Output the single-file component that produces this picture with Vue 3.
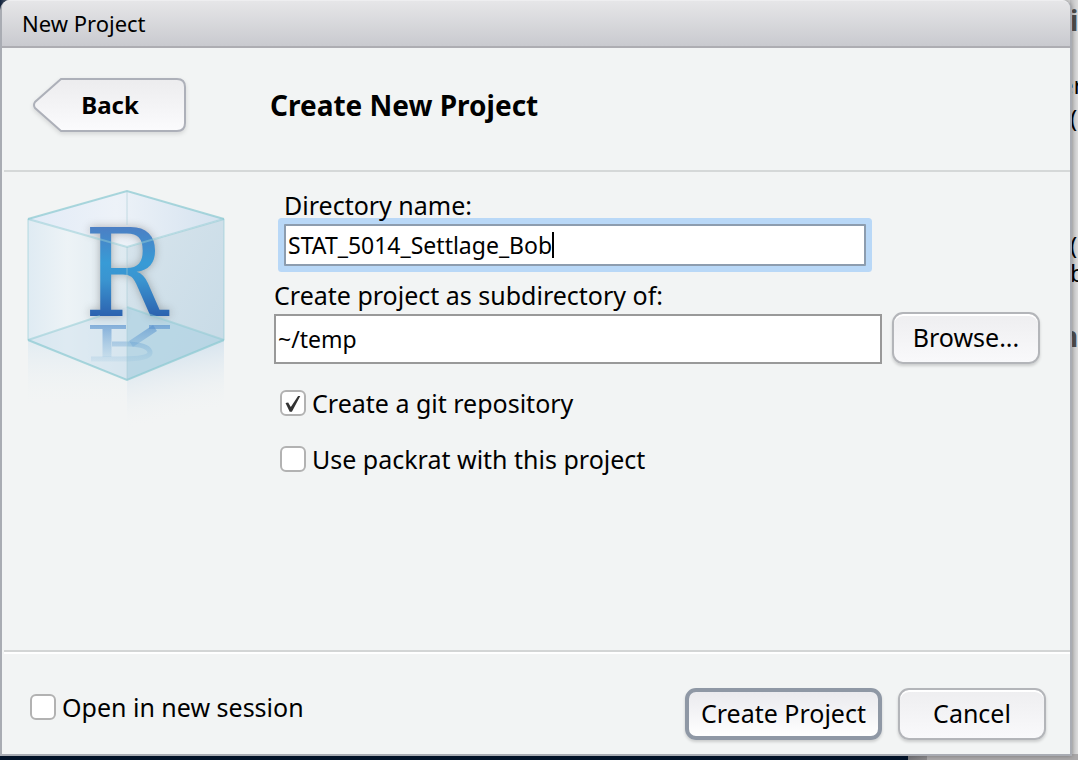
<script setup>
import { ref, watch, onMounted } from 'vue'

const directory = ref('STAT_5014_Settlage_Bob')
const parent = ref('~/temp')
const useGit = ref(true)
const usePackrat = ref(false)
const newSession = ref(false)

const nameInput = ref(null)
const caretLeft = ref(0)

function placeCaret() {
  const style = getComputedStyle(nameInput.value)
  const context = document.createElement('canvas').getContext('2d')
  context.font = `${style.fontSize} ${style.fontFamily}`
  caretLeft.value = Math.round(context.measureText(directory.value).width) + 4
}

onMounted(placeCaret)
watch(directory, placeCaret)

const fragments = [
  { text: 'i', kind: 'heading', top: 4 },
  { text: 'er', kind: 'code wide', top: 69 },
  { text: '(', kind: 'code', top: 102 },
  { text: '(', kind: 'code', top: 229 },
  { text: 'b', kind: 'code', top: 257 },
  { text: 'n', kind: 'heading wide', top: 320 }
]
</script>

<template>
  <div class="desktop">
    <div class="behind" aria-hidden="true">
      <span
        v-for="(f, i) in fragments"
        :key="i"
        class="fragment"
        :class="f.kind"
        :style="{ top: f.top + 'px' }"
      >{{ f.text }}</span>
    </div>
    <div class="taskbar" aria-hidden="true"></div>

    <main class="dialog" role="dialog" aria-labelledby="dialog-title">
      <header id="dialog-title" class="titlebar">New Project</header>

      <section class="heading-row">
        <button type="button" class="back">
          <svg class="back-shape" viewBox="0 0 156 58" aria-hidden="true">
            <defs>
              <linearGradient id="backFill" x1="0" y1="0" x2="0" y2="1">
                <stop offset="0" stop-color="#ececee" />
                <stop offset="1" stop-color="#fbfbfd" />
              </linearGradient>
            </defs>
            <path
              d="M29 2H145Q153 2 153 10V46Q153 54 145 54H29L3 31Q1 28 3 25Z"
              fill="url(#backFill)"
              stroke="#adb0b9"
              stroke-width="2"
            />
          </svg>
          <span class="back-label">Back</span>
        </button>
        <h1>Create New Project</h1>
      </section>

      <section class="content">
        <svg class="logo" viewBox="20 184 212 252" role="img" aria-label="R project">
          <defs>
            <linearGradient id="faceLeft" x1="0" x2="1" y1="0" y2="0">
              <stop offset="0" stop-color="#dfebf3" />
              <stop offset=".4" stop-color="#edf3f6" />
              <stop offset="1" stop-color="#dde9f0" />
            </linearGradient>
            <linearGradient id="faceRight" x1="0" x2="1" y1="0" y2="1">
              <stop offset="0" stop-color="#d7e4ec" />
              <stop offset="1" stop-color="#c6dae6" />
            </linearGradient>
            <linearGradient id="lid" x1="0" x2="1" y1="0" y2="0">
              <stop offset="0" stop-color="#e2ebf7" />
              <stop offset=".45" stop-color="#edf2f8" />
              <stop offset="1" stop-color="#d4e2ef" />
            </linearGradient>
            <linearGradient id="letter" gradientUnits="userSpaceOnUse" x1="0" x2="0" y1="227" y2="316">
              <stop offset="0" stop-color="#4c7fc4" />
              <stop offset=".4" stop-color="#389bd6" />
              <stop offset=".6" stop-color="#3a94d0" />
              <stop offset="1" stop-color="#2c62af" />
            </linearGradient>
            <linearGradient id="reflection" gradientUnits="userSpaceOnUse" x1="0" x2="0" y1="324" y2="362">
              <stop offset="0" stop-color="#5b93cf" stop-opacity=".7" />
              <stop offset="1" stop-color="#7bb4d8" stop-opacity=".12" />
            </linearGradient>
            <linearGradient id="fadeLeft" gradientUnits="userSpaceOnUse" x1="0" x2="0" y1="340" y2="408">
              <stop offset="0" stop-color="#e2ecf2" />
              <stop offset="1" stop-color="#f2f4f4" stop-opacity="0" />
            </linearGradient>
            <linearGradient id="fadeRight" gradientUnits="userSpaceOnUse" x1="165" x2="180" y1="350" y2="419">
              <stop offset="0" stop-color="#d5e3ee" />
              <stop offset="1" stop-color="#f2f4f4" stop-opacity="0" />
            </linearGradient>
          </defs>

          <path d="M28 340L127 380V424L28 408Z" fill="url(#fadeLeft)" />
          <path d="M127 380L224 340V410L127 432Z" fill="url(#fadeRight)" />
          <path d="M28 219L127 247V380L28 340Z" fill="url(#faceLeft)" />
          <path d="M127 247L224 219V340L127 380Z" fill="url(#faceRight)" />
          <path d="M28 219L127 191L224 219L127 247Z" fill="url(#lid)" />
          <path d="M28 340L127 307V380Z" fill="#cfe2ee" opacity=".5" />
          <path d="M127 307L224 340L127 380Z" fill="#b4d4e3" opacity=".8" />
          <g fill="none" stroke="url(#reflection)">
            <path d="M90 327H126M149 327H170" stroke-width="4" />
            <path d="M107 329V357" stroke-width="9" />
            <path d="M155 328L131 344" stroke-width="7" />
            <path d="M112 344H129Q150 345 150 353Q149 359 122 359H91" stroke-width="5" />
          </g>
          <text class="letter" x="84" y="316" fill="url(#letter)">R</text>
          <g fill="none" stroke="#8fcbd3" stroke-width="2" opacity=".75">
            <path d="M28 219L127 191L224 219" />
            <path d="M28 340L127 380L224 340" />
          </g>
          <g fill="none" stroke="#8fcbd3" stroke-width="2" opacity=".5">
            <path d="M28 219L127 247L224 219" />
            <path d="M28 340L100 316" />
            <path d="M127 307L224 340" />
          </g>
          <path d="M28 219V340M224 219V340" fill="none" stroke="#8fcbd3" stroke-width="2" opacity=".3" />
          <path d="M127 191V225M127 247V380" fill="none" stroke="#a8cbd6" opacity=".6" />
        </svg>

        <form class="form" @submit.prevent>
          <label class="name-label" for="directory">Directory name:</label>
          <div class="name-box">
            <input id="directory" ref="nameInput" v-model="directory" class="text-input" type="text" spellcheck="false" />
            <span class="caret" :style="{ left: caretLeft + 'px' }"></span>
          </div>

          <label class="parent-label" for="parent">Create project as subdirectory of:</label>
          <div class="parent-row">
            <input id="parent" v-model="parent" class="text-input parent-input" type="text" spellcheck="false" />
            <button type="button" class="button">Browse...</button>
          </div>

          <label class="check git"><input v-model="useGit" type="checkbox" /><span>Create a git repository</span></label>
          <label class="check packrat"><input v-model="usePackrat" type="checkbox" /><span>Use packrat with this project</span></label>
        </form>
      </section>

      <footer class="actions">
        <label class="check"><input v-model="newSession" type="checkbox" /><span>Open in new session</span></label>
        <div class="buttons">
          <button type="button" class="button primary">Create Project</button>
          <button type="button" class="button">Cancel</button>
        </div>
      </footer>
    </main>
  </div>
</template>

<style>
body {
  margin: 0;
}
</style>

<style scoped>
.desktop,
.desktop * {
  box-sizing: border-box;
}

.desktop {
  position: relative;
  display: flex;
  min-height: 100vh;
  padding: 0 6px 4px 0;
  overflow: hidden;
  background: linear-gradient(90deg, #10233f 0, #8e959d 12px, #d2d2d2 40px);
  color: #000;
  font-family: "Noto Sans", "Open Sans", sans-serif;
  font-size: 25px;
  line-height: 32px;
}

.behind {
  position: absolute;
  inset: 0 0 0 auto;
  width: 8px;
  overflow: hidden;
  background: linear-gradient(90deg, #bcbcbe, #dcdcdc);
}

.fragment {
  position: absolute;
  left: 0;
  font-size: 24px;
}

.fragment.heading {
  color: #4b4b4b;
  font-size: 28px;
  font-weight: 700;
}

.fragment.wide {
  left: -10px;
}

.taskbar {
  position: absolute;
  inset: auto 0 0 0;
  height: 6px;
  background: linear-gradient(90deg, #03142b 84.2%, #77777b 84.2%, #8c8a8c 86%, #aaa8a9 86%);
}

.dialog {
  position: relative;
  display: flex;
  flex: 1;
  flex-direction: column;
  min-width: 0;
  border: 2px solid #a9acb3;
  border-top: 0;
  border-radius: 10px 10px 0 0;
  background: #f2f4f4;
  box-shadow: 0 0 4px rgba(0, 0, 0, 0.3);
}

.titlebar {
  height: 48px;
  padding: 6px 20px;
  border-top: 1px solid #eeeef0;
  border-bottom: 2px solid #adadb2;
  border-radius: 8px 8px 0 0;
  background: linear-gradient(#e6e6e8, #c9cacf);
  font-size: 22px;
}

.heading-row {
  display: flex;
  align-items: flex-start;
  gap: 82px;
  height: 124px;
  margin: 0 0 0 2px;
  padding: 29px 28px 0;
  border-bottom: 2px solid #d5d8d8;
}

.back {
  position: relative;
  width: 156px;
  height: 58px;
  padding: 0;
  border: 0;
  background: none;
  color: #000;
  font: inherit;
  font-size: 24px;
  font-weight: 700;
}

.back-shape {
  display: block;
  width: 100%;
  height: 100%;
  filter: drop-shadow(0 2px 2px rgba(0, 0, 0, 0.12));
}

.back-label {
  position: absolute;
  inset: 12px 0 auto;
}

h1 {
  margin: 10px 0 0;
  font-size: 28px;
  font-weight: 700;
  line-height: 36px;
}

.content {
  display: flex;
  flex: 1;
  align-items: flex-start;
  gap: 40px;
  padding: 12px 30px 0 18px;
}

.logo {
  flex: none;
  width: 212px;
  height: 252px;
}

.letter {
  font-family: "DejaVu Serif Condensed", "DejaVu Serif", serif;
  font-size: 122px;
  filter: drop-shadow(0 0 4px rgba(90, 90, 90, 0.45));
}

.form {
  display: flex;
  flex: 1;
  flex-direction: column;
  min-width: 0;
  padding-top: 5px;
}

.name-label {
  position: relative;
  z-index: 1;
  margin-left: 12px;
}

.name-box {
  position: relative;
  margin: 3px 174px 0 12px;
}

.text-input {
  display: block;
  width: 100%;
  height: 42px;
  padding: 0 2px;
  border: 2px solid #999;
  border-radius: 0;
  outline: 0;
  background: #fff;
  color: #000;
  font: inherit;
  font-size: 23px;
}

.name-box .text-input {
  border-color: #8d9daf;
  box-shadow: 0 0 0 6px #b9d8f7;
  border-radius: 1px;
}

.caret {
  position: absolute;
  top: 8px;
  width: 2px;
  height: 26px;
  background: #000;
}

.parent-label {
  margin: 13px 0 0 2px;
}

.parent-row {
  display: flex;
  gap: 10px;
  margin: 3px 0 0 2px;
}

.parent-input {
  flex: 1;
  min-width: 0;
  height: 50px;
}

.button {
  height: 52px;
  min-width: 148px;
  padding: 0 12px 2px;
  border: 2px solid #b3b5b9;
  border-radius: 11px;
  background: linear-gradient(#eeeef0, #f9f9fb);
  box-shadow: 0 2px 3px rgba(0, 0, 0, 0.16), inset 0 2px 0 #fff;
  color: #000;
  font: inherit;
}

.parent-row .button {
  margin-top: -2px;
}

.primary {
  border: 4px solid #8f98a5;
  background: linear-gradient(#eaeaee, #fff);
  box-shadow: 0 2px 3px rgba(0, 0, 0, 0.16);
}

.check {
  display: flex;
  align-items: center;
  align-self: flex-start;
  gap: 6px;
}

.check input {
  position: relative;
  flex: none;
  width: 26px;
  height: 26px;
  margin: 0;
  border: 2px solid #b2b2b2;
  border-radius: 6px;
  appearance: none;
  background: #fff;
}

.check input:checked::after {
  position: absolute;
  inset: 0;
  background: #333;
  clip-path: polygon(16% 50%, 28% 48%, 40% 68%, 73% 18%, 83% 18%, 45% 90%, 35% 90%);
  content: "";
}

.git {
  margin: 23px 0 0 8px;
}

.packrat {
  margin: 24px 0 0 8px;
}

.actions {
  display: flex;
  align-items: flex-start;
  justify-content: space-between;
  height: 104px;
  margin: 0 0 0 2px;
  padding: 36px 24px 0 26px;
  border-top: 2px solid #d3d5d5;
  box-shadow: inset 0 2px 0 #fff;
}

.actions .check {
  margin-top: 3px;
}

.buttons {
  display: flex;
  gap: 16px;
}
</style>
